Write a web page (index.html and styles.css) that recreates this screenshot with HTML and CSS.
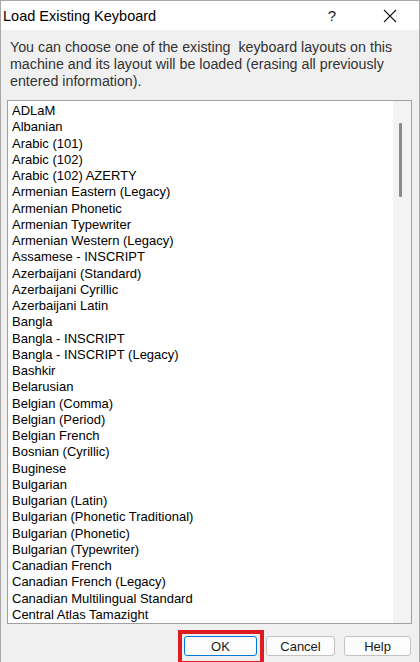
FILE: index.html
```html
<html>
<head>
<link rel="stylesheet" href="styles.css">
</head>
<body>
<div class="window">
  <div class="titlebar">
    <span class="title">Load Existing Keyboard</span>
    <span class="help-btn">?</span>
    <span class="close-btn">
      <svg width="14" height="14" viewBox="0 0 14 14"><path d="M1 1 L13 13 M13 1 L1 13" stroke="#1a1a1a" stroke-width="1.1" fill="none"/></svg>
    </span>
  </div>
  <div class="content">
    <p class="desc">You can choose one of the existing&nbsp; keyboard layouts on this machine and its layout will be loaded (erasing all previously entered information).</p>
    <div class="listbox">
      <ul class="items">
        <li>ADLaM</li>
        <li>Albanian</li>
        <li>Arabic (101)</li>
        <li>Arabic (102)</li>
        <li>Arabic (102) AZERTY</li>
        <li>Armenian Eastern (Legacy)</li>
        <li>Armenian Phonetic</li>
        <li>Armenian Typewriter</li>
        <li>Armenian Western (Legacy)</li>
        <li>Assamese - INSCRIPT</li>
        <li>Azerbaijani (Standard)</li>
        <li>Azerbaijani Cyrillic</li>
        <li>Azerbaijani Latin</li>
        <li>Bangla</li>
        <li>Bangla - INSCRIPT</li>
        <li>Bangla - INSCRIPT (Legacy)</li>
        <li>Bashkir</li>
        <li>Belarusian</li>
        <li>Belgian (Comma)</li>
        <li>Belgian (Period)</li>
        <li>Belgian French</li>
        <li>Bosnian (Cyrillic)</li>
        <li>Buginese</li>
        <li>Bulgarian</li>
        <li>Bulgarian (Latin)</li>
        <li>Bulgarian (Phonetic Traditional)</li>
        <li>Bulgarian (Phonetic)</li>
        <li>Bulgarian (Typewriter)</li>
        <li>Canadian French</li>
        <li>Canadian French (Legacy)</li>
        <li>Canadian Multilingual Standard</li>
        <li>Central Atlas Tamazight</li>
      </ul>
      <div class="scrollbar"><div class="thumb"></div></div>
    </div>
    <div class="buttons">
      <button class="btn btn-ok">OK</button>
      <button class="btn btn-cancel">Cancel</button>
      <button class="btn btn-help">Help</button>
    </div>
  </div>
</div>
</body>
</html>
```

FILE: styles.css
```css
* {
  box-sizing: border-box;
  margin: 0;
  padding: 0;
}

body {
  width: 420px;
  height: 662px;
  overflow: hidden;
  font-family: "Liberation Sans", Arial, sans-serif;
}

.window {
  height: 662px;
  border: 1px solid #a9a9a9;
  border-bottom: none;
  background: #f0f0f0;
  display: flex;
  flex-direction: column;
}

.titlebar {
  height: 29px;
  background: #ffffff;
  display: flex;
  align-items: center;
}

.title {
  font-size: 14.5px;
  color: #000;
  padding-left: 2px;
  flex: 1;
}

.help-btn {
  font-size: 15px;
  color: #1a1a1a;
  width: 58px;
  text-align: center;
}

.close-btn {
  width: 58px;
  display: flex;
  justify-content: center;
}

.content {
  flex: 1;
  display: flex;
  flex-direction: column;
  padding: 9px 6px 0 6px;
}

.desc {
  font-size: 14.25px;
  line-height: 17px;
  color: #333;
  padding: 0 8px 0 3px;
}

.listbox {
  margin-top: 10px;
  height: 524px;
  width: 405px;
  border: 1px solid #a0a0a0;
  background: #fff;
  display: flex;
  overflow: hidden;
}

.items {
  list-style: none;
  flex: 1;
  padding: 2px 0 0 4px;
  font-size: 13px;
  line-height: 16.25px;
  color: #000;
}

.scrollbar {
  width: 18px;
  background: #f3f3f3;
  padding: 22px 0 0 6px;
}

.thumb {
  width: 3px;
  height: 74px;
  background: #8a8a8a;
  border-radius: 1px;
}

.buttons {
  display: flex;
  justify-content: flex-end;
  gap: 9px;
  margin-top: 12px;
  padding-right: 2px;
}

.btn {
  height: 20px;
  background: #fdfdfd;
  border: 1px solid #c3c3c3;
  border-radius: 3px;
  font-family: "Liberation Sans", Arial, sans-serif;
  font-size: 13px;
  color: #1a1a1a;
}

.btn-ok {
  width: 73px;
  border-color: #0078d7;
  position: relative;
}

.btn-ok::after {
  content: "";
  position: absolute;
  left: -7px;
  right: -8px;
  top: -7px;
  bottom: -10px;
  border: 4px solid #e11b22;
}

.btn-cancel {
  width: 69px;
}

.btn-help {
  width: 67px;
}
```
